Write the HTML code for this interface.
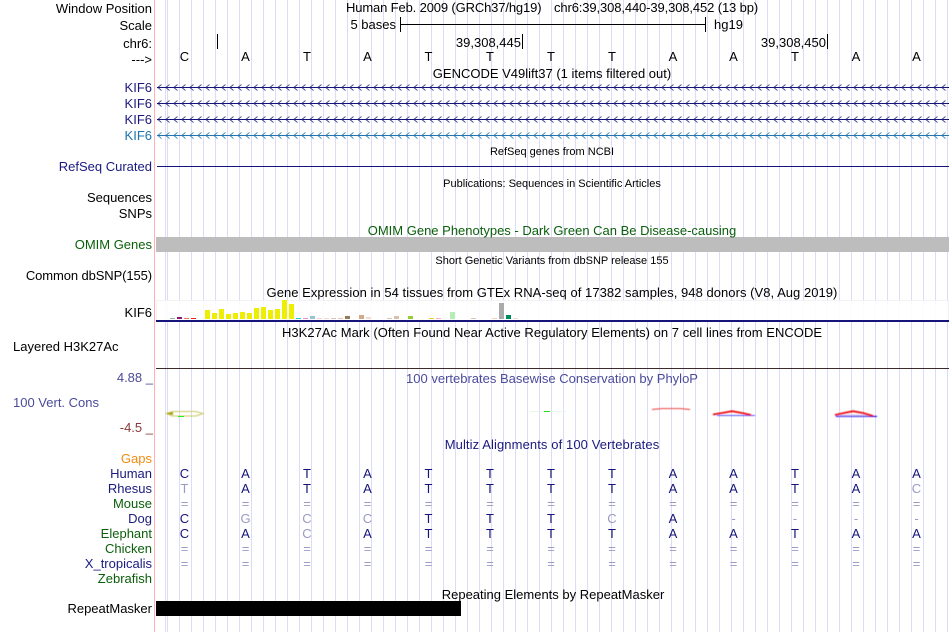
<!DOCTYPE html>
<html><head><meta charset="utf-8">
<style>
html,body{margin:0;padding:0;background:#fff}
#p{position:relative;width:950px;height:632px;overflow:hidden;background:#fff;font-family:"Liberation Sans",sans-serif;font-size:13px;line-height:15px;color:#000;}
#p div{position:absolute;white-space:pre}
#p #grid{left:155px;top:0;width:794px;height:632px;background-image:repeating-linear-gradient(90deg,#dcdcf6 0,#dcdcf6 1px,transparent 1px,transparent 12px);background-position:12px 0;}
.r{right:798px}
.c{width:700px;left:202px;text-align:center}
.s{font-size:11px}
.n{color:#1a1a80}
.g{color:#0a5f0a}
svg{position:absolute;left:0;top:0}
text{font-family:"Liberation Sans",sans-serif;font-size:13px;text-anchor:middle}
.d{fill:#14147a}.f{fill:#9a9ac4}
</style></head><body><div id="p">
<div id="grid"></div>
<div style="left:154px;top:0;width:1px;height:632px;background:#ffb0b0"></div>
<div style="left:156px;top:237px;width:793px;height:15px;background:#bdbdbd"></div>
<div style="left:156px;top:601px;width:305px;height:15px;background:#000"></div>

<svg width="950" height="632" viewBox="0 0 950 632">
<defs>
<pattern id="a1" x="157" y="84" width="8" height="16" patternUnits="userSpaceOnUse"><path d="M4.5 .5L.8 3.5L4.5 6.5" fill="none" stroke="#4a4a96" stroke-width="1"/></pattern>
<pattern id="a2" x="157" y="132" width="8" height="16" patternUnits="userSpaceOnUse"><path d="M4.5 .5L.8 3.5L4.5 6.5" fill="none" stroke="#4a90c0" stroke-width="1"/></pattern>
<filter id="bl"><feGaussianBlur stdDeviation=".4"/></filter>
</defs>
<rect x="157" y="84" width="792" height="39" fill="url(#a1)"/>
<rect x="157" y="132" width="792" height="7" fill="url(#a2)"/>
<path d="M157 87.5H949M157 103.5H949M157 119.5H949" stroke="#14147a"/>
<path d="M157 135.5H949" stroke="#1f74b0"/>
<path d="M157 166.5H949" stroke="#14147a"/>
<!-- ruler -->
<path d="M217.5 34V49M522.5 34V49M827.5 34V49M400.5 17V32M705.5 17V32M400 24.5H706" stroke="#000"/>
<!-- expression -->
<rect x="156.5" y="300.5" width="792" height="20" fill="#fff" stroke="#f2f2f2" opacity=".9"/>
<g>
<rect x="170" y="318" width="5" height="1" fill="#8fb89a"/><rect x="177" y="317" width="5" height="2" fill="#8b1a6b"/><rect x="184" y="318" width="5" height="1" fill="#f07060"/><rect x="191" y="318" width="5" height="1" fill="#ee2222"/>
<g fill="#eeee00"><rect x="205" y="310" width="5" height="9"/><rect x="212" y="313" width="5" height="6"/><rect x="219" y="309" width="5" height="10"/><rect x="226" y="314" width="5" height="5"/><rect x="233" y="313" width="5" height="6"/><rect x="240" y="312" width="5" height="7"/><rect x="247" y="313" width="5" height="6"/><rect x="254" y="308" width="5" height="11"/><rect x="261" y="307" width="5" height="12"/><rect x="268" y="310" width="5" height="9"/><rect x="275" y="309" width="5" height="10"/><rect x="282" y="300" width="5" height="19"/><rect x="289" y="304" width="5" height="15"/></g>
<rect x="296" y="318" width="5" height="1" fill="#22cccc"/><rect x="303" y="318" width="5" height="1" fill="#ee88dd"/><rect x="310" y="316" width="5" height="3" fill="#99c4d4"/>
<g fill="#f2d6d2"><rect x="317" y="318" width="5" height="1"/><rect x="324" y="318" width="5" height="1"/></g>
<rect x="331" y="318" width="5" height="1" fill="#d9c2b4"/><rect x="338" y="318" width="5" height="1" fill="#eec4aa"/><rect x="345" y="316" width="5" height="3" fill="#96785c"/><rect x="359" y="315" width="5" height="4" fill="#d2aa88"/><rect x="366" y="317" width="5" height="2" fill="#f2dcd2"/><rect x="387" y="318" width="5" height="1" fill="#d6c4b6"/><rect x="394" y="316" width="5" height="3" fill="#d8c2ae"/><rect x="408" y="316" width="5" height="3" fill="#99cc33"/><rect x="429" y="318" width="5" height="1" fill="#eecc22"/><rect x="436" y="318" width="5" height="1" fill="#ffb0c0"/><rect x="450" y="312" width="5" height="7" fill="#b4eeb4"/><rect x="471" y="318" width="5" height="1" fill="#d6c4b6"/><rect x="492" y="318" width="5" height="1" fill="#f2d2b8"/><rect x="499" y="303" width="5" height="16" fill="#aaaaaa"/><rect x="506" y="315" width="5" height="4" fill="#008b5a"/><rect x="513" y="318" width="5" height="1" fill="#f0d8d0"/>
</g>
<rect x="156" y="320" width="793" height="2" fill="#14147a"/>
<rect x="156" y="368" width="793" height="1" fill="#3a2a2a"/>
<!-- conservation -->
<g filter="url(#bl)">
<path d="M172 411.5H196L203 413.5L196 416H172L167 413.5Z" fill="none" stroke="#c8c860" stroke-width="1"/>
<path d="M165 413.5L173 412V415Z" fill="#a8a000"/>
<path d="M652 409.5L662 408.5H680L690 409.5" fill="none" stroke="#ee6060" stroke-width="1.2"/>
<path d="M717 415.5H755" stroke="#5555ff" stroke-width="1"/>
<path d="M713 414.5L722 413L732 411.2L742 413L751 415" fill="none" stroke="#ee1010" stroke-width="1.9"/>
<path d="M836 416.5H877" stroke="#1010ee" stroke-width="1.2"/>
<path d="M838 415.5H872" stroke="#c0a8e8" stroke-width="1.5"/>
<path d="M835 415L844 413L853 411.2L863 413L873 416" fill="none" stroke="#ee1010" stroke-width="1.9"/>
</g>
<rect x="178" y="416" width="6" height="1" fill="#22ee22"/>
<rect x="530" y="411" width="36" height="1" fill="#e8f8e8"/>
<rect x="544" y="411" width="6" height="1" fill="#22dd22"/>
<!-- bases -->
<g fill="#000">
<text x="184.5" y="61">C</text><text x="245.5" y="61">A</text><text x="307" y="61">T</text><text x="367.5" y="61">A</text><text x="428.5" y="61">T</text><text x="490" y="61">T</text><text x="551" y="61">T</text><text x="612" y="61">T</text><text x="673" y="61">A</text><text x="733.5" y="61">A</text><text x="795" y="61">T</text><text x="856" y="61">A</text><text x="916.5" y="61">A</text>
</g>
<g class="d">
<text x="184.5" y="478">C</text><text x="245.5" y="478">A</text><text x="307" y="478">T</text><text x="367.5" y="478">A</text><text x="428.5" y="478">T</text><text x="490" y="478">T</text><text x="551" y="478">T</text><text x="612" y="478">T</text><text x="673" y="478">A</text><text x="733.5" y="478">A</text><text x="795" y="478">T</text><text x="856" y="478">A</text><text x="916.5" y="478">A</text>
<text x="184.5" y="493" class="f">T</text><text x="245.5" y="493">A</text><text x="307" y="493">T</text><text x="367.5" y="493">A</text><text x="428.5" y="493">T</text><text x="490" y="493">T</text><text x="551" y="493">T</text><text x="612" y="493">T</text><text x="673" y="493">A</text><text x="733.5" y="493">A</text><text x="795" y="493">T</text><text x="856" y="493">A</text><text x="916.5" y="493" class="f">C</text>
<g class="f"><text x="184.5" y="508">=</text><text x="245.5" y="508">=</text><text x="307" y="508">=</text><text x="367.5" y="508">=</text><text x="428.5" y="508">=</text><text x="490" y="508">=</text><text x="551" y="508">=</text><text x="612" y="508">=</text><text x="673" y="508">=</text><text x="733.5" y="508">=</text><text x="795" y="508">=</text><text x="856" y="508">=</text><text x="916.5" y="508">=</text></g>
<text x="184.5" y="523">C</text><text x="245.5" y="523" class="f">G</text><text x="307" y="523" class="f">C</text><text x="367.5" y="523" class="f">C</text><text x="428.5" y="523">T</text><text x="490" y="523">T</text><text x="551" y="523">T</text><text x="612" y="523" class="f">C</text><text x="673" y="523">A</text><text x="733.5" y="523" class="f">-</text><text x="795" y="523" class="f">-</text><text x="856" y="523" class="f">-</text><text x="916.5" y="523" class="f">-</text>
<text x="184.5" y="538">C</text><text x="245.5" y="538">A</text><text x="307" y="538" class="f">C</text><text x="367.5" y="538">A</text><text x="428.5" y="538">T</text><text x="490" y="538">T</text><text x="551" y="538">T</text><text x="612" y="538">T</text><text x="673" y="538">A</text><text x="733.5" y="538">A</text><text x="795" y="538">T</text><text x="856" y="538">A</text><text x="916.5" y="538">A</text>
<g class="f"><text x="184.5" y="553">=</text><text x="245.5" y="553">=</text><text x="307" y="553">=</text><text x="367.5" y="553">=</text><text x="428.5" y="553">=</text><text x="490" y="553">=</text><text x="551" y="553">=</text><text x="612" y="553">=</text><text x="673" y="553">=</text><text x="733.5" y="553">=</text><text x="795" y="553">=</text><text x="856" y="553">=</text><text x="916.5" y="553">=</text>
<text x="184.5" y="568">=</text><text x="245.5" y="568">=</text><text x="307" y="568">=</text><text x="367.5" y="568">=</text><text x="428.5" y="568">=</text><text x="490" y="568">=</text><text x="551" y="568">=</text><text x="612" y="568">=</text><text x="673" y="568">=</text><text x="733.5" y="568">=</text><text x="795" y="568">=</text><text x="856" y="568">=</text><text x="916.5" y="568">=</text></g>
</g>
</svg>

<div class="r" style="top:1px">Window Position</div>
<div class="r" style="top:18px">Scale</div>
<div class="r" style="top:36px">chr6:</div>
<div class="r" style="top:52px">---&gt;</div>
<div class="r n" style="top:80px">KIF6</div>
<div class="r n" style="top:96px">KIF6</div>
<div class="r n" style="top:112px">KIF6</div>
<div class="r" style="top:128px;color:#1f74b0">KIF6</div>
<div class="r n" style="top:159px">RefSeq Curated</div>
<div class="r" style="top:190px">Sequences</div>
<div class="r" style="top:206px">SNPs</div>
<div class="r g" style="top:237px">OMIM Genes</div>
<div class="r" style="top:268px;letter-spacing:-.1px">Common dbSNP(155)</div>
<div class="r" style="top:305px">KIF6</div>
<div style="left:13px;top:339px">Layered H3K27Ac</div>
<div style="right:797px;top:370px;color:#4b4b9b">4.88 _</div>
<div style="left:13px;top:395px;color:#4b4b9b">100 Vert. Cons</div>
<div style="right:797px;top:420px;color:#8b3a3a">-4.5 _</div>
<div class="r" style="top:451px;color:#f28c10">Gaps</div>
<div class="r n" style="top:466px">Human</div>
<div class="r n" style="top:481px">Rhesus</div>
<div class="r g" style="top:496px">Mouse</div>
<div class="r n" style="top:511px">Dog</div>
<div class="r g" style="top:526px">Elephant</div>
<div class="r g" style="top:541px">Chicken</div>
<div class="r n" style="top:556px">X_tropicalis</div>
<div class="r g" style="top:571px">Zebrafish</div>
<div class="r" style="top:601px">RepeatMasker</div>

<div style="left:346px;top:0;letter-spacing:-.14px">Human Feb. 2009 (GRCh37/hg19)</div>
<div style="left:554px;top:0;letter-spacing:-.12px">chr6:39,308,440-39,308,452 (13 bp)</div>
<div style="right:554px;top:17px">5 bases</div>
<div style="left:714px;top:17px">hg19</div>
<div style="right:429px;top:35px">39,308,445</div>
<div style="right:124px;top:35px">39,308,450</div>
<div class="c" style="top:66px">GENCODE V49lift37 (1 items filtered out)</div>
<div class="c s" style="top:145px">RefSeq genes from NCBI</div>
<div class="c s" style="top:177px">Publications: Sequences in Scientific Articles</div>
<div class="c g" style="top:223px">OMIM Gene Phenotypes - Dark Green Can Be Disease-causing</div>
<div class="c s" style="top:254px">Short Genetic Variants from dbSNP release 155</div>
<div class="c" style="top:285px;letter-spacing:.04px">Gene Expression in 54 tissues from GTEx RNA-seq of 17382 samples, 948 donors (V8, Aug 2019)</div>
<div class="c" style="top:325px;letter-spacing:.03px">H3K27Ac Mark (Often Found Near Active Regulatory Elements) on 7 cell lines from ENCODE</div>
<div class="c" style="top:371px;color:#4b4b9b">100 vertebrates Basewise Conservation by PhyloP</div>
<div class="c" style="top:437px;color:#1a1a80;letter-spacing:.1px">Multiz Alignments of 100 Vertebrates</div>
<div class="c" style="top:587px;left:203px">Repeating Elements by RepeatMasker</div>
</div></body></html>
